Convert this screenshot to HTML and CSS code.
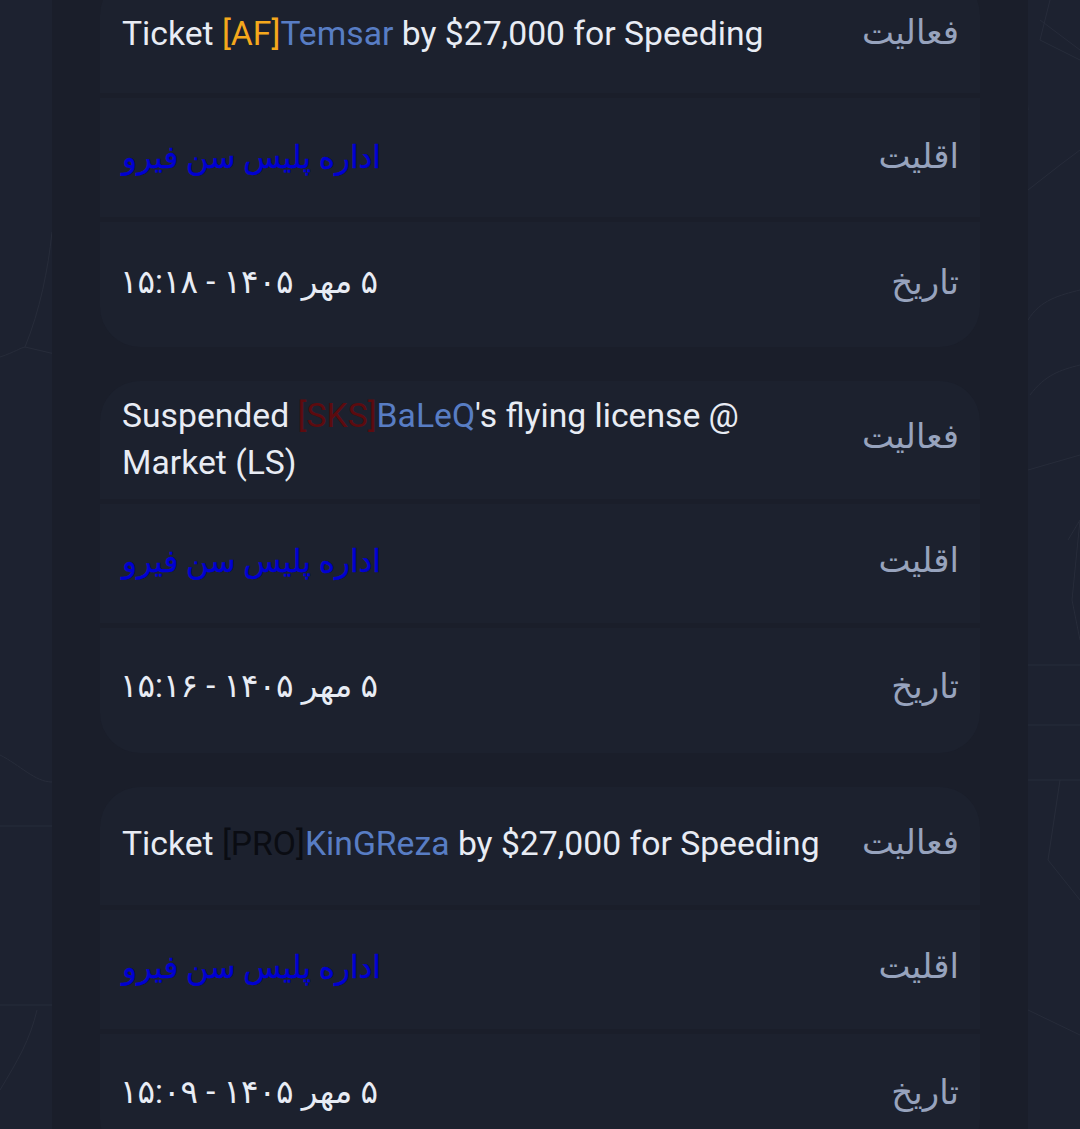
FILE: index.html
```html
<!DOCTYPE html>
<html lang="fa">
<head>
<meta charset="utf-8">
<title>Logs</title>
<link rel="stylesheet" href="styles.css">
</head>
<body>
<svg class="map" width="1080" height="1129" viewBox="0 0 1080 1129" fill="none" aria-hidden="true">
  <path d="M0 357 C15 352 20 348 25 347 L55 354 M25 347 C40 310 48 270 52 232 M1028 190 L1060 165 L1080 150 M1028 320 C1040 300 1060 295 1080 290 M1030 395 C1045 375 1060 370 1080 365 M1022 40 L1028 110 M1040 20 L1080 50 M1050 0 L1040 40 L1080 60 M1028 470 L1080 455 M1068 540 L1080 520 L1072 600 L1080 640 M1028 665 H1080 M1028 725 H1080 M1028 780 H1080 M1060 780 L1048 860 L1080 900 M1028 1010 L1080 1035 M0 826 H52 M0 755 C20 765 35 782 52 782 M37 1010 C30 1040 18 1060 0 1090 M0 1005 H52 M100 760 L85 800 L60 825 M180 752 V786 M145 752 V786 M595 786 L650 752 M740 752 V786 M820 752 V786 M265 347 L280 381 M660 347 L665 381" stroke="#272c3a" stroke-width="1"/>
</svg>
<main class="column">
  <section class="card card-first">
    <div class="row row-top">
      <div class="value">Ticket <span class="tag-af">[AF]</span><span class="name">Temsar</span> by $27,000 for Speeding</div>
      <div class="label">فعالیت</div>
    </div>
    <div class="row row-mid">
      <div class="value faction">اداره پلیس سن فیرو</div>
      <div class="label">اقلیت</div>
    </div>
    <div class="row row-last">
      <div class="value date">۵ مهر ۱۴۰۵ - ۱۵:۱۸</div>
      <div class="label">تاریخ</div>
    </div>
  </section>
  <section class="card">
    <div class="row row-top">
      <div class="value value-wrap">Suspended <span class="tag-sks">[SKS]</span><span class="name">BaLeQ</span>'s flying license @ Market (LS)</div>
      <div class="label">فعالیت</div>
    </div>
    <div class="row row-mid">
      <div class="value faction">اداره پلیس سن فیرو</div>
      <div class="label">اقلیت</div>
    </div>
    <div class="row row-last">
      <div class="value date">۵ مهر ۱۴۰۵ - ۱۵:۱۶</div>
      <div class="label">تاریخ</div>
    </div>
  </section>
  <section class="card">
    <div class="row row-top">
      <div class="value">Ticket <span class="tag-pro">[PRO]</span><span class="name">KinGReza</span> by $27,000 for Speeding</div>
      <div class="label">فعالیت</div>
    </div>
    <div class="row row-mid">
      <div class="value faction">اداره پلیس سن فیرو</div>
      <div class="label">اقلیت</div>
    </div>
    <div class="row row-last">
      <div class="value date">۵ مهر ۱۴۰۵ - ۱۵:۰۹</div>
      <div class="label">تاریخ</div>
    </div>
  </section>
</main>
</body>
</html>
```
FILE: styles.css
```css
* { box-sizing: border-box; }
html, body { margin: 0; height: 1129px; overflow: hidden; }
body {
  position: relative;
  background: #1d2230;
  font-family: Roboto, "DejaVu Sans", sans-serif;
  font-size: 33.7px;
  line-height: 47px;
}
.map { position: absolute; left: 0; top: 0; }
.column {
  position: relative;
  width: 976px;
  margin-left: 52px;
  padding: 0 48px;
  height: 1129px;
  background: #1a1e2a;
  display: flex;
  flex-direction: column;
  gap: 34px;
}
.card {
  flex: none;
  display: flex;
  flex-direction: column;
  gap: 5px;
  border-radius: 40px;
  overflow: hidden;
}
.card-first { margin-top: -25px; }
.card-first .row { padding-top: 4px; }
.row {
  display: flex;
  align-items: center;
  justify-content: space-between;
  gap: 30px;
  padding: 0 21px 0 22px;
  background: #1c212e;
}
.row-top { height: 118px; }
.row-mid { height: 119px; }
.row-last { height: 125px; padding-bottom: 6px; }
.card-first .row-last { padding-bottom: 6px; }
.value { color: #e8ecf4; max-width: 704px; margin-top: -6px; }
.value-wrap { margin-top: -2px; }
.label {
  flex: none;
  color: #97a3bd;
  font-size: 34px;
  direction: rtl;
  margin-bottom: 8px;
}
.row-mid .label { margin-bottom: 6px; }
.row-last .label { margin-bottom: 2px; }
.faction {
  color: #0000d2;
  font-size: 31px;
  direction: rtl;
  font-weight: 500;
  margin-top: -4px;
  -webkit-text-stroke: 0.4px #0000d2;
}
.date { font-size: 32.7px; direction: rtl; margin: -3px 0 0 -2px; }
.name { color: #587dc4; }
.tag-af { color: #f5a81c; }
.tag-sks { color: #5c0b0f; }
.tag-pro { color: #0a0c12; }
```
